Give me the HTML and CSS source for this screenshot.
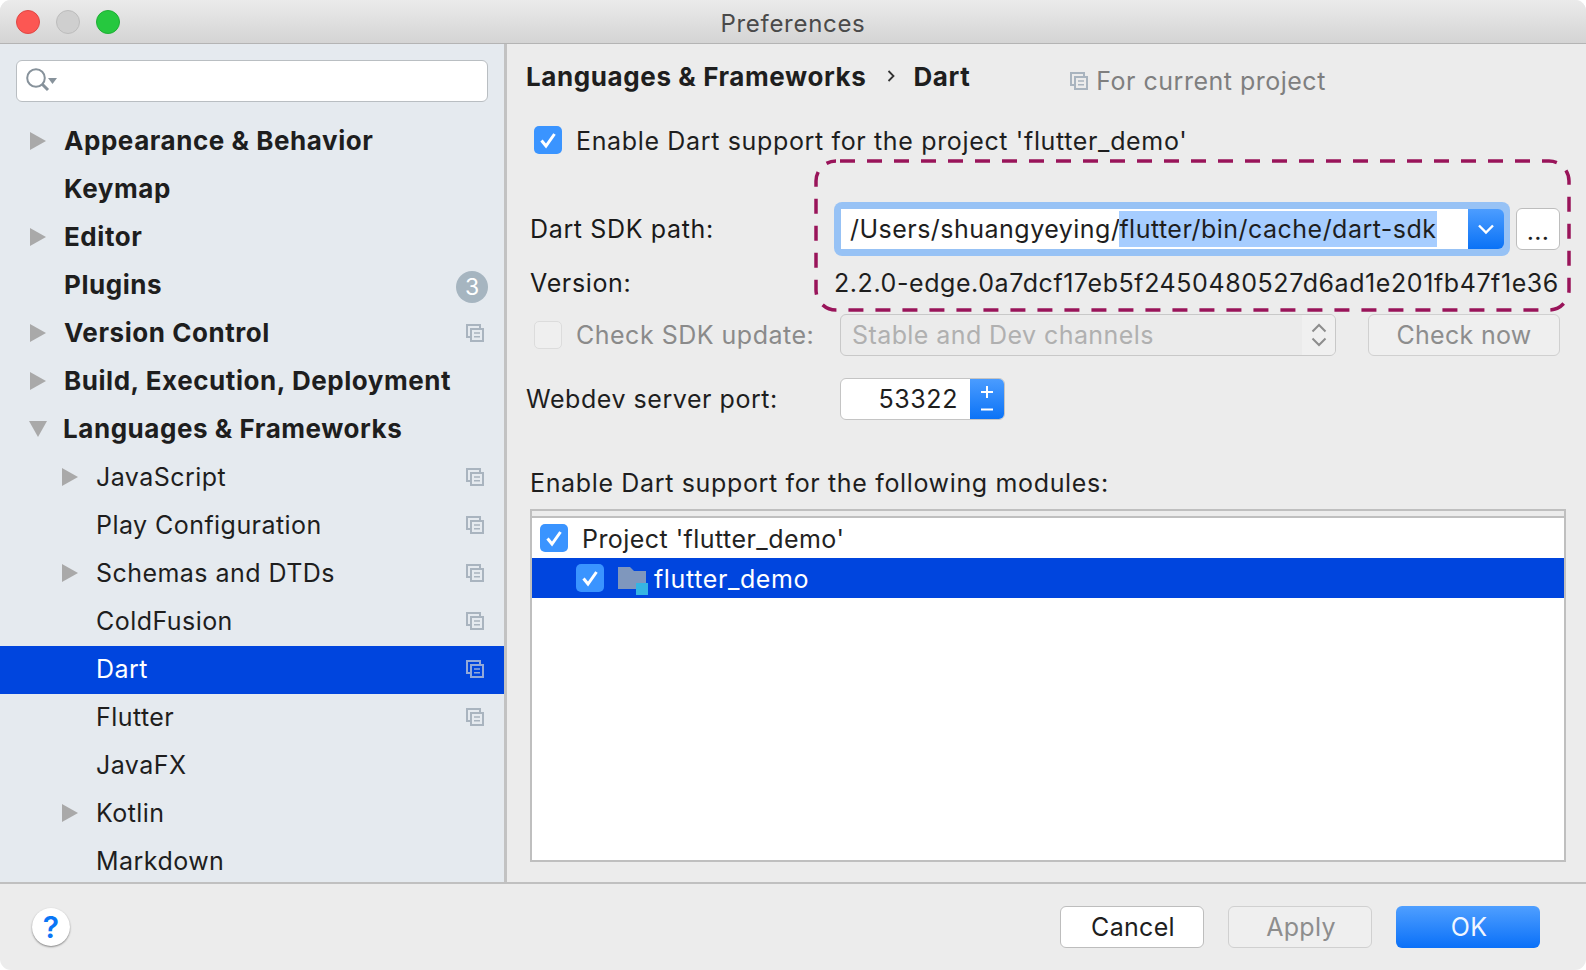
FILE: index.html
```html
<!DOCTYPE html>
<html lang="en">
<head>
<meta charset="utf-8">
<title>Preferences</title>
<link rel="stylesheet" href="styles.css">
</head>
<body>
<svg class="defs" width="0" height="0" aria-hidden="true">
  <symbol id="copy" viewBox="0 0 18 18">
    <path d="M4.500 13H1V1h13v3.500" fill="none" stroke="currentColor" stroke-width="2"/>
    <rect x="5" y="5" width="12" height="12" fill="none" stroke="currentColor" stroke-width="2"/>
    <path d="M8 9h6M8 12.800h6" fill="none" stroke="currentColor" stroke-width="1.600"/>
  </symbol>
  <symbol id="tick" viewBox="0 0 28 28">
    <path d="M7.500 14.500l4.500 5.500 8.500-12" fill="none" stroke="#fff" stroke-width="3"/>
  </symbol>
</svg>
<div class="window">
  <header class="titlebar">
    <div class="lights"><i class="light red"></i><i class="light gray"></i><i class="light green"></i></div>
    <div class="title">Preferences</div>
  </header>
  <div class="main">
    <aside class="sidebar">
      <div class="search">
        <svg width="34" height="26" viewBox="0 0 34 26"><circle cx="11" cy="11" r="8.800" fill="none" stroke="#87929b" stroke-width="2"/><path d="M17 17l6 6" stroke="#87929b" stroke-width="3"/><path d="M23 11h9l-4.500 6z" fill="#87929b"/></svg>
      </div>
      <ul class="tree">
        <li class="row top"><i class="tri"></i><span>Appearance &amp; Behavior</span></li>
        <li class="row top"><i class="tri none"></i><span>Keymap</span></li>
        <li class="row top"><i class="tri"></i><span>Editor</span></li>
        <li class="row top"><i class="tri none"></i><span>Plugins</span><b class="badge">3</b></li>
        <li class="row top"><i class="tri"></i><span>Version Control</span><svg class="copy"><use href="#copy"/></svg></li>
        <li class="row top"><i class="tri"></i><span>Build, Execution, Deployment</span></li>
        <li class="row top"><i class="tri open"></i><span>Languages &amp; Frameworks</span></li>
        <li class="row sub"><i class="tri"></i><span>JavaScript</span><svg class="copy"><use href="#copy"/></svg></li>
        <li class="row sub"><i class="tri none"></i><span>Play Configuration</span><svg class="copy"><use href="#copy"/></svg></li>
        <li class="row sub"><i class="tri"></i><span>Schemas and DTDs</span><svg class="copy"><use href="#copy"/></svg></li>
        <li class="row sub"><i class="tri none"></i><span>ColdFusion</span><svg class="copy"><use href="#copy"/></svg></li>
        <li class="row sub selected"><i class="tri none"></i><span>Dart</span><svg class="copy"><use href="#copy"/></svg></li>
        <li class="row sub"><i class="tri none"></i><span>Flutter</span><svg class="copy"><use href="#copy"/></svg></li>
        <li class="row sub"><i class="tri none"></i><span>JavaFX</span></li>
        <li class="row sub"><i class="tri"></i><span>Kotlin</span></li>
        <li class="row sub"><i class="tri none"></i><span>Markdown</span></li>
      </ul>
    </aside>
    <section class="panel">
      <div class="crumbs">
        <strong class="crumb">Languages &amp; Frameworks</strong>
        <svg class="chev" width="8" height="14" viewBox="0 0 8 14"><path d="M1.500 2l5 5-5 5" fill="none" stroke="#333" stroke-width="1.800"/></svg>
        <strong class="crumb">Dart</strong>
        <span class="scope"><svg class="copy"><use href="#copy"/></svg>For current project</span>
      </div>
      <div class="line enable">
        <span class="check on"><svg><use href="#tick"/></svg></span>
        <span class="txt">Enable Dart support for the project 'flutter_demo'</span>
      </div>
      <div class="line sdk">
        <span class="txt lab">Dart SDK path:</span>
        <div class="ring">
          <div class="path"><span class="txt pathtxt">/Users/shuangyeying/<mark class="sel">flutter/bin/cache/dart-sdk</mark></span></div>
          <div class="drop"><svg width="18" height="12" viewBox="0 0 18 12"><path d="M2 2.500l7 7 7-7" fill="none" stroke="#fff" stroke-width="2.400"/></svg></div>
        </div>
        <button class="btn dots">...</button>
      </div>
      <div class="line version">
        <span class="txt lab">Version:</span>
        <span class="txt ver">2.2.0-edge.0a7dcf17eb5f2450480527d6ad1e201fb47f1e36</span>
      </div>
      <div class="line update">
        <span class="check off"></span>
        <span class="txt dim lab2">Check SDK update:</span>
        <div class="combo"><span class="txt faint">Stable and Dev channels</span>
          <div class="updown"><svg width="18" height="26" viewBox="0 0 18 26"><path d="M2.500 9.500L9 3l6.500 6.500M2.500 16.500L9 23l6.500-6.500" fill="none" stroke="#8d8d8d" stroke-width="2"/></svg></div>
        </div>
        <button class="btn off-btn now">Check now</button>
      </div>
      <div class="line web">
        <span class="txt lab3">Webdev server port:</span>
        <div class="spin"><span class="txt num">53322</span>
          <div class="spin-btn"><svg width="18" height="32" viewBox="0 0 18 32"><path d="M9 3v12M3 9h12M3 26.500h12" fill="none" stroke="#fff" stroke-width="2"/></svg></div>
        </div>
      </div>
      <div class="line mods"><span class="txt">Enable Dart support for the following modules:</span></div>
      <div class="table">
        <div class="thead"></div>
        <div class="trow">
          <span class="check on"><svg><use href="#tick"/></svg></span>
          <span class="txt soft">Project 'flutter_demo'</span>
        </div>
        <div class="trow child">
          <span class="check on"><svg><use href="#tick"/></svg></span>
          <span class="folder"><svg width="30" height="28" viewBox="0 0 30 28"><path d="M0 0h12l4 4h12v18H0z" fill="#7f97bd"/><rect x="18" y="16" width="12" height="12" fill="#35b5e3"/></svg></span>
          <span class="txt white">flutter_demo</span>
        </div>
      </div>
      <svg class="dashed" width="757" height="153" viewBox="0 0 757 153"><rect x="2" y="2" width="753" height="149" rx="20" fill="none" stroke="#99145a" stroke-width="3.500" stroke-dasharray="15 12" stroke-dashoffset="-4"/></svg>
    </section>
  </div>
  <footer class="footer">
    <button class="help">?</button>
    <div class="actions">
      <button class="btn act">Cancel</button>
      <button class="btn act off-btn apply">Apply</button>
      <button class="btn act ok">OK</button>
    </div>
  </footer>
</div>
</body>
</html>
```
FILE: styles.css
```css
* { box-sizing: border-box; }
html, body { margin: 0; height: 100%; background: #fff; }
body { font-family: Inter, "Liberation Sans", sans-serif; font-size: 25px; color: #1e1e1e; overflow: hidden; }
.defs { position: absolute; }
.window { width: 1586px; height: 970px; display: flex; flex-direction: column; border-radius: 11px; overflow: hidden; background: #ececec; }

.titlebar { height: 44px; flex: none; display: flex; align-items: center; justify-content: center; position: relative; background: linear-gradient(#ebebeb, #d4d4d4); border-bottom: 1px solid #b4b4b4; }
.lights { position: absolute; left: 16px; top: 10px; display: flex; gap: 16px; }
.light { display: block; width: 24px; height: 24px; border-radius: 50%; }
.red { background: #fc5753; border: 1px solid #df4744; }
.gray { background: #cfcfcf; border: 1px solid #bcbcbc; }
.green { background: #26c83f; border: 1px solid #1fae35; }
.title { font-size: 24px; letter-spacing: .7px; color: #4a4a4a; padding-top: 3px; }

.main { flex: 1; min-height: 0; display: flex; border-bottom: 2px solid #c0c0c0; }
.sidebar { width: 507px; flex: none; background: #e5eaef; border-right: 3px solid #c2c2c2; overflow: hidden; padding-top: 16px; }
.search { width: 472px; height: 42px; margin-left: 16px; background: #fff; border: 1.500px solid #b9bec2; border-radius: 6px; padding: 6px 0 0 8px; display: flex; align-items: flex-start; }
.tree { list-style: none; margin: 16px 0 0; padding: 0; }
.row { height: 48px; display: flex; align-items: center; }
.row span { padding-bottom: 2px; }
.row.top span { padding-bottom: 4px; }
.tri { width: 0; height: 0; border-left: 16px solid #a9a9a9; border-top: 9px solid transparent; border-bottom: 9px solid transparent; flex: none; margin-bottom: 2px; }
.tri.none { border-color: transparent; }
.tri.open { border-left: 9px solid transparent; border-right: 9px solid transparent; border-top: 16px solid #a9a9a9; border-bottom: 0; margin-left: -1px; margin-right: -2px; }
.row.top { padding-left: 30px; font-weight: 700; font-size: 26px; letter-spacing: .55px; }
.row.top span { margin-left: 18px; }
.row.sub { padding-left: 62px; letter-spacing: .45px; }
.row.sub span { margin-left: 18px; }
.row .copy { margin-left: auto; margin-right: 20px; margin-bottom: 2px; }
.copy { width: 18px; height: 18px; color: #a9b4bf; flex: none; }
.badge { margin-left: auto; margin-right: 16px; margin-top: 1px; width: 32px; height: 32px; border-radius: 50%; background: #a6b5c0; color: #fff; font-weight: 400; font-size: 23px; letter-spacing: 0; display: flex; align-items: center; justify-content: center; }
.selected { background: #0045de; color: #fff; }
.selected .copy { color: #93a9d8; }

.panel { flex: 1; min-width: 0; position: relative; padding-top: 12px; }
.crumbs { height: 40px; display: flex; align-items: center; padding-left: 19px; }
.crumb { font-size: 26px; font-weight: 700; letter-spacing: .6px; }
.chev { margin: 0 18px 0 21px; }
.scope { margin-left: 100px; margin-top: 9px; color: #7f7f7f; display: flex; align-items: center; gap: 8px; letter-spacing: .5px; }
.line { display: flex; align-items: center; }
.txt { white-space: nowrap; letter-spacing: .65px; }
.enable { height: 28px; margin-top: 30px; padding-left: 27px; gap: 14px; }
.enable .txt { padding-top: 2px; }
.check { width: 28px; height: 28px; border-radius: 5px; flex: none; display: block; }
.check svg { width: 28px; height: 28px; display: block; }
.check.on { background: #3a94ff; }
.check.off { background: #efefef; border: 1.500px solid #dcdcdc; }
.sdk { height: 54px; margin-top: 48px; padding-left: 23px; }
.lab { width: 304px; flex: none; color: #1a1a1a; }
.ring { width: 676px; height: 54px; flex: none; background: #97c2f5; border-radius: 8px; padding: 7px 6px 7px 7px; display: flex; }
.path { flex: 1; background: #fff; display: flex; align-items: center; padding-left: 9px; }
.pathtxt { letter-spacing: .48px; }
.sel { background: #a6cdff; color: inherit; padding: 3px 0; margin-left: -1px; }
.drop { width: 36px; flex: none; background: linear-gradient(#4c9dff, #0a72f6); border-radius: 0 6px 6px 0; display: flex; align-items: center; justify-content: center; }
.btn { font: inherit; color: inherit; background: #fff; border: 1.500px solid #bdbdbd; border-radius: 6px; padding: 0; letter-spacing: .3px; }
.dots { width: 44px; height: 42px; margin-left: 6px; line-height: 1; padding-top: 4px; }
.version { height: 30px; margin-top: 12px; padding-left: 23px; }
.ver { letter-spacing: .58px; }
.update { height: 42px; margin-top: 16px; padding-left: 27px; }
.update .check { width: 28px; height: 28px; }
.dim { color: #8a8a8a; letter-spacing: .5px; }
.lab2 { width: 264px; flex: none; margin-left: 14px; }
.combo { width: 496px; height: 42px; flex: none; border: 1.500px solid #c8c8c8; border-radius: 6px; background: #ebebeb; display: flex; align-items: center; padding-left: 11px; position: relative; overflow: hidden; }
.faint { color: #b0b0b0; letter-spacing: .42px; }
.updown { margin-left: auto; width: 33px; align-self: stretch; background: #f0f0f0; display: flex; align-items: center; justify-content: center; }
.now { width: 192px; height: 42px; margin-left: 32px; }
.off-btn { background: #efefef; border-color: #d0d0d0; color: #8d8d8d; }
.web { height: 42px; margin-top: 22px; padding-left: 19px; }
.lab3 { width: 314px; flex: none; letter-spacing: .55px; }
.spin { width: 165px; height: 42px; flex: none; background: #fff; border: 1.500px solid #c4c4c4; border-radius: 6px; display: flex; align-items: center; overflow: hidden; }
.num { flex: 1; text-align: right; padding-right: 12px; letter-spacing: .6px; }
.spin-btn { width: 34px; height: 42px; flex: none; background: linear-gradient(#4c9dff, #0a72f6); display: flex; align-items: center; justify-content: center; }
.mods { height: 30px; margin-top: 48px; padding-left: 23px; }
.table { margin: 11px 0 0 23px; width: 1036px; height: 353px; border: 2px solid #bfbfbf; background: #fff; }
.thead { height: 7px; background: #ececec; border-bottom: 2px solid #bfbfbf; }
.trow { height: 40px; display: flex; align-items: center; padding-left: 8px; }
.trow .txt { letter-spacing: .45px; padding-top: 2px; }
.soft { margin-left: 14px; color: #222; }
.child { background: #0045de; padding-left: 44px; color: #fff; }
.trow .white { margin-left: 6px; letter-spacing: .62px; }
.folder { margin-left: 14px; height: 28px; margin-top: 5px; }
.folder svg { display: block; }
.dashed { position: absolute; left: 307px; top: 115px; }

.footer { height: 86px; flex: none; display: flex; align-items: center; position: relative; padding: 0 46px 0 32px; }
.help { width: 38px; height: 38px; border-radius: 50%; border: 0; background: #fff; box-shadow: 0 1px 2px rgba(0,0,0,.45); color: #0a76f6; font: 600 30px Inter, sans-serif; padding: 0; }
.actions { margin-left: auto; display: flex; gap: 24px; }
.act { width: 144px; height: 42px; padding-left: 2px; }
.ok { background: linear-gradient(#4f9fff, #0a70f8); border: 0; color: #f0f6ff; }
```
